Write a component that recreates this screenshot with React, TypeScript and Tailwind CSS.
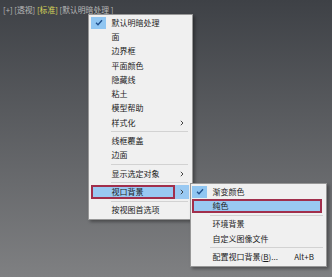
import React from "react";

const Check = () => (
  <svg width="8" height="7" viewBox="0 0 8 7" className="block">
    <polyline points="1,3.8 3,5.8 7,1.2" fill="none" stroke="#1f4f8c" strokeWidth="1.3" />
  </svg>
);

const Arrow = () => (
  <svg width="4" height="6" viewBox="0 0 4 6" className="block">
    <polyline points="0.8,0.8 3,3 0.8,5.2" fill="none" stroke="#333" strokeWidth="0.9" />
  </svg>
);

type ItemProps = {
  label: React.ReactNode;
  checked?: boolean;
  arrow?: boolean;
  shortcut?: string;
  highlight?: boolean;
  redWidth?: string;
};

function Item({ label, checked, arrow, shortcut, highlight, redWidth }: ItemProps) {
  return (
    <div
      className={
        "relative flex h-[14.3px] items-center " + (highlight ? "bg-[#99c9f2]" : "")
      }
    >
      <div className="flex h-full w-[20.5px] shrink-0 items-center">
        {checked ? (
          <div className="flex h-[12px] w-[15px] items-center justify-center bg-[#90c6f2]">
            <Check />
          </div>
        ) : null}
      </div>
      <div className="flex-1 whitespace-nowrap leading-none">{label}</div>
      {shortcut ? <div className="mr-[8px] whitespace-nowrap leading-none">{shortcut}</div> : null}
      {arrow ? (
        <div className="mr-[5px]">
          <Arrow />
        </div>
      ) : null}
      {redWidth ? (
        <div className={"pointer-events-none absolute left-0 top-0 h-full border-2 border-[#a12f4c] " + redWidth} />
      ) : null}
    </div>
  );
}

const Sep = ({ inset }: { inset: string }) => (
  <div className={"flex h-[4px] items-center " + inset}>
    <div className="h-px w-full bg-[#d2d2d2]" />
  </div>
);

export default function App() {
  return (
    <div
      className="relative h-[277px] w-[332px] overflow-hidden bg-[linear-gradient(to_bottom,#3e4146,#7f8082)] text-[8px] text-[#1b1b1b]"
      style={{ fontFamily: '"Noto Sans CJK SC", "Noto Sans", sans-serif' }}
    >
      <div className="absolute left-[3px] top-[6px] whitespace-nowrap text-[7.8px] leading-none text-[#b9b9b9]">
        [+] [透视] <span className="text-[#d9d65a]">[标准]</span> [默认明暗处理 ]
      </div>

      <div className="absolute left-[88px] top-[14px] w-[105px] border border-[#979797] bg-[#f0f0f0] pb-[2px] pl-[2px] pr-[3px] pt-[0.5px] shadow-[2px_2px_3px_rgba(0,0,0,0.35)]">
        <Item label="默认明暗处理" checked />
        <Item label="面" />
        <Item label="边界框" />
        <Item label="平面颜色" />
        <Item label="隐藏线" />
        <Item label="粘土" />
        <Item label="模型帮助" />
        <Item label="样式化" arrow />
        <Sep inset="ml-[20px] mr-[1px]" />
        <Item label="线框覆盖" />
        <Item label="边面" />
        <Sep inset="ml-[20px] mr-[1px]" />
        <Item label="显示选定对象" arrow />
        <Sep inset="ml-[20px] mr-[1px]" />
        <Item label="视口背景" arrow highlight redWidth="w-[84px]" />
        <Sep inset="ml-[20px] mr-[1px]" />
        <Item label="按视图首选项" />
      </div>

      <div className="absolute left-[190px] top-[183px] w-[137px] border border-[#979797] bg-[#f0f0f0] pb-[2px] pl-[1px] pr-[4px] pt-[0.5px] shadow-[2px_2px_3px_rgba(0,0,0,0.35)]">
        <Item label="渐变颜色" checked />
        <Item label="纯色" highlight redWidth="w-full" />
        <Sep inset="ml-[18px] mr-[-1px]" />
        <Item label="环境背景" />
        <Item label="自定义图像文件" />
        <Sep inset="ml-[18px] mr-[-1px]" />
        <Item
          label={
            <span>
              配置视口背景(<span className="underline">B</span>)...
            </span>
          }
          shortcut="Alt+B"
        />
      </div>
    </div>
  );
}
